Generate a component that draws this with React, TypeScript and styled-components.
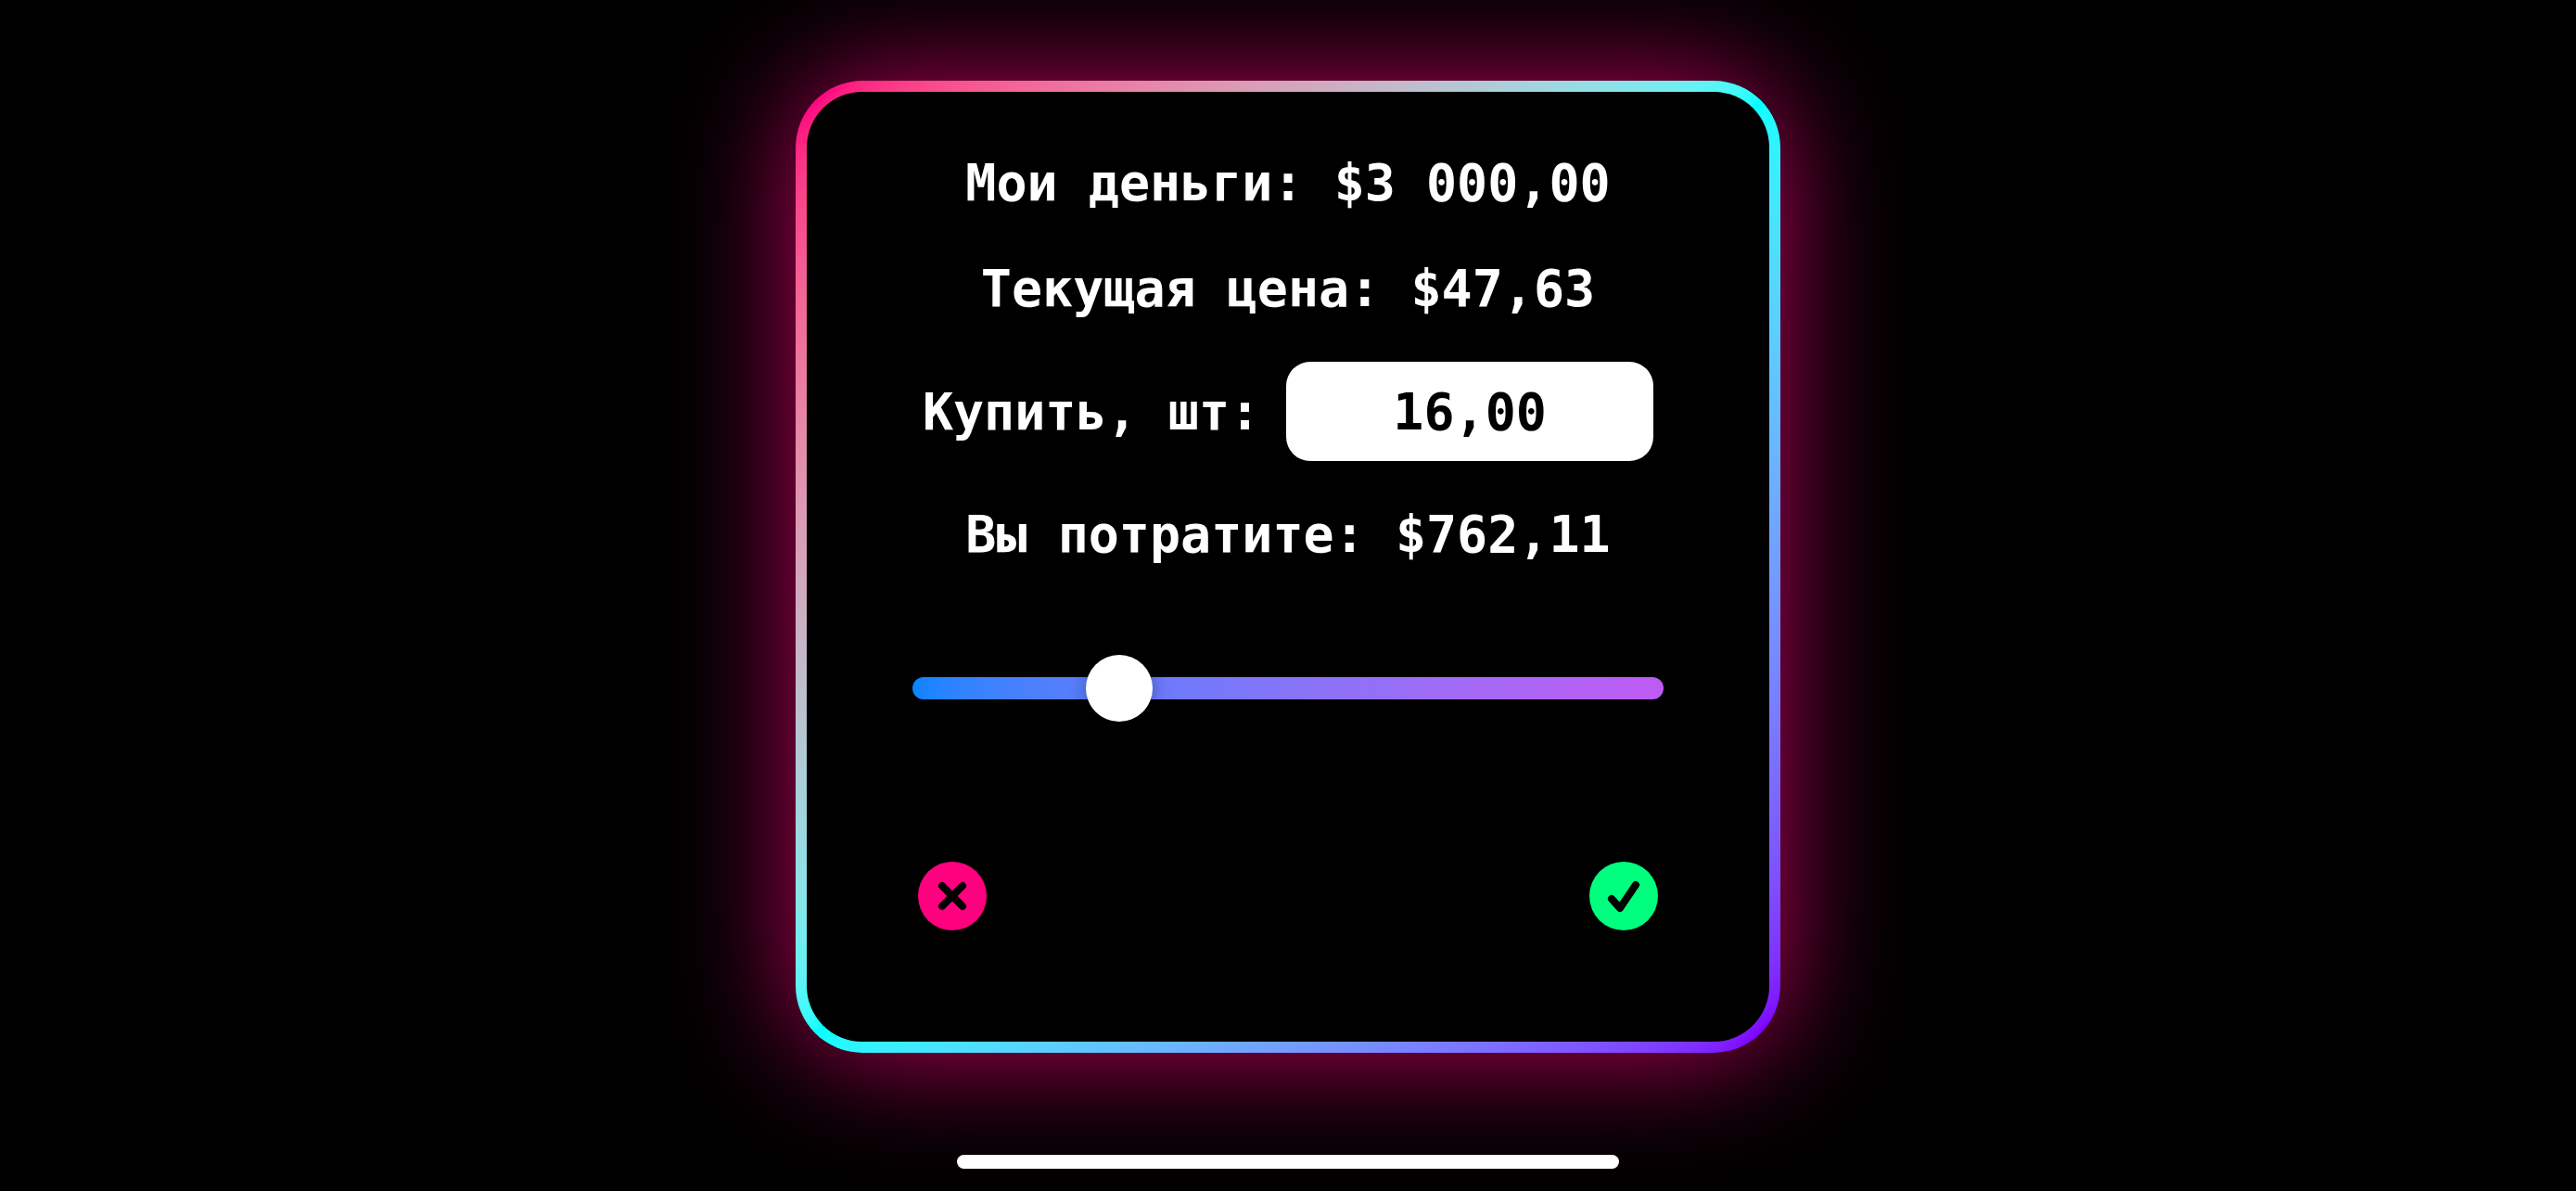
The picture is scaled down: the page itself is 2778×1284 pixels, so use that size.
import React, { useState } from "react";
import styled, { createGlobalStyle } from "styled-components";

const BALANCE = 3000;
const PRICE = 47.63;
const SPENT_AT_START = 762.11;
const MAX_AMOUNT = BALANCE / PRICE;

const GlobalStyle = createGlobalStyle`
  *, *::before, *::after { box-sizing: border-box; }
  body { margin: 0; background: #000; }
`;

const Page = styled.div`
  min-height: 100vh;
  display: flex;
  flex-direction: column;
  align-items: center;
  padding: 87px 24px 24px;
  overflow: hidden;
  background: #000;
  color: #fff;
  font-family: "DejaVu Sans Mono", "Liberation Mono", monospace;
  font-size: 55px;
  font-weight: 700;
  line-height: 70px;
`;

const Card = styled.form`
  width: 100%;
  max-width: 1062px;
  display: flex;
  flex-direction: column;
  padding: 63px 114px 120px;
  border: 12px solid transparent;
  border-radius: 72px;
  background:
    linear-gradient(#000, #000) padding-box,
    linear-gradient(to bottom right in oklab, #ff007f 2%, #00ffff, #7f00ff 98%) border-box;
  box-shadow: 0 0 130px rgba(255, 0, 127, 0.74);
`;

const Rows = styled.div`
  display: flex;
  flex-direction: column;
  align-items: center;
  gap: 44px;
`;

const Line = styled.p`
  margin: 0;
  text-align: center;
`;

const AmountRow = styled.div`
  display: flex;
  align-items: center;
  gap: 28px;
`;

const AmountLabel = styled.label`
  white-space: nowrap;
`;

const AmountInput = styled.input`
  width: 396px;
  height: 107px;
  padding: 0 24px;
  border: 0;
  border-radius: 26px;
  background: #fff;
  color: #000;
  font: inherit;
  text-align: center;
  outline: none;
`;

const Slider = styled.input`
  appearance: none;
  width: 100%;
  height: 72px;
  margin: 95px 0 0;
  background: transparent;
  cursor: pointer;

  &::-webkit-slider-runnable-track {
    height: 24px;
    border-radius: 12px;
    background: linear-gradient(to right in oklab, #0a84ff, #bf5af2);
  }

  &::-webkit-slider-thumb {
    appearance: none;
    width: 72px;
    height: 72px;
    margin-top: -24px;
    border: 0;
    border-radius: 50%;
    background: #fff;
    box-shadow: 0 2px 20px rgba(0, 0, 0, 0.3);
  }
`;

const Actions = styled.div`
  display: flex;
  justify-content: space-between;
  margin-top: 151px;
  padding: 0 6px;
`;

const RoundButton = styled.button<{ $color: string }>`
  display: flex;
  width: 74px;
  height: 74px;
  padding: 0;
  border: 0;
  border-radius: 50%;
  background: ${({ $color }) => $color};
  cursor: pointer;
`;

const Glyph = styled.svg`
  width: 100%;
  height: 100%;
  fill: none;
  stroke: #000;
  stroke-width: 8;
  stroke-linecap: round;
  stroke-linejoin: round;
`;

const HomeIndicator = styled.div`
  width: 714px;
  max-width: 100%;
  height: 15px;
  margin-top: auto;
  border-radius: 8px;
  background: #fff;
  z-index: 1;
`;

const format = (value: number) =>
  value
    .toFixed(2)
    .replace(".", ",")
    .replace(/\B(?=(\d{3})+(?=,))/g, "\u00a0");

export default function App() {
  const [amount, setAmount] = useState(16);
  const [text, setText] = useState(format(16));
  const spent = amount === 16 ? SPENT_AT_START : amount * PRICE;

  const slide = (value: number) => {
    setAmount(value);
    setText(format(value));
  };

  const type = (value: string) => {
    setText(value);
    const parsed = Number(value.replace(",", "."));
    if (!Number.isNaN(parsed)) setAmount(Math.min(parsed, MAX_AMOUNT));
  };

  return (
    <>
      <GlobalStyle />
      <Page>
        <Card onSubmit={(e: React.FormEvent) => e.preventDefault()}>
          <Rows>
            <Line>Мои деньги: ${format(BALANCE)}</Line>
            <Line>Текущая цена: ${format(PRICE)}</Line>
            <AmountRow>
              <AmountLabel htmlFor="amount">Купить, шт:</AmountLabel>
              <AmountInput
                id="amount"
                inputMode="decimal"
                value={text}
                onChange={(e) => type(e.target.value)}
              />
            </AmountRow>
            <Line>Вы потратите: ${format(spent)}</Line>
          </Rows>
          <Slider
            type="range"
            aria-label="Количество"
            min={0}
            max={MAX_AMOUNT}
            step="any"
            value={amount}
            onChange={(e) => slide(Number(e.target.value))}
          />
          <Actions>
            <RoundButton type="button" $color="#ff007f" aria-label="Отмена">
              <Glyph viewBox="0 0 74 74">
                <path d="M26 26 L48 48 M48 26 L26 48" />
              </Glyph>
            </RoundButton>
            <RoundButton type="submit" $color="#00ff7f" aria-label="Купить">
              <Glyph viewBox="0 0 74 74">
                <path d="M24 40 L33 50 L50 25" />
              </Glyph>
            </RoundButton>
          </Actions>
        </Card>
        <HomeIndicator />
      </Page>
    </>
  );
}
